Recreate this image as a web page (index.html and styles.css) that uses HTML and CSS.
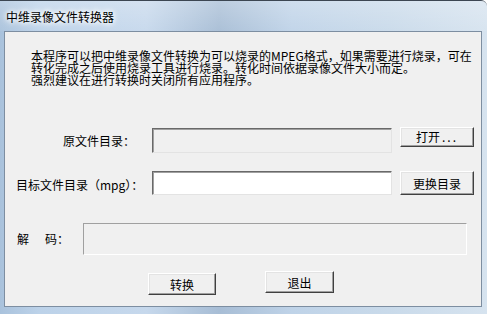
FILE: index.html
```html
<!DOCTYPE html>
<html lang="zh-CN">
<head>
    <meta charset="UTF-8">
    <title>中维录像文件转换器</title>
    <link rel="stylesheet" href="styles.css">
</head>
<body>
    <div class="window">
        <div class="titlebar">
            <span class="title">中维录像文件转换器</span>
        </div>
        <div class="client">
            <p class="intro">本程序可以把中维录像文件转换为可以烧录的MPEG格式，如果需要进行烧录，可在<br>转化完成之后使用烧录工具进行烧录。转化时间依据录像文件大小而定。<br>强烈建议在进行转换时关闭所有应用程序。</p>

            <div class="row row-src">
                <label class="label label-src">原文件目录：</label>
                <div class="field field-disabled"></div>
                <button class="btn btn-open">打开<span class="dots">...</span></button>
            </div>

            <div class="row row-dst">
                <label class="label label-dst">目标文件目录（mpg）：</label>
                <div class="field field-white"></div>
                <button class="btn btn-change">更换目录</button>
            </div>

            <div class="row row-decode">
                <label class="label label-decode">解<span class="gap"></span>码：</label>
                <div class="decode-box"></div>
            </div>

            <div class="actions">
                <button class="btn btn-convert">转换</button>
                <button class="btn btn-exit">退出</button>
            </div>
        </div>
    </div>
</body>
</html>
```

FILE: styles.css
```css
html, body {
    margin: 0;
    padding: 0;
}
body {
    width: 487px;
    height: 314px;
    overflow: hidden;
    font-family: "Noto Sans CJK SC", "Liberation Sans", sans-serif;
    font-size: 12px;
    color: #000;
}
.window {
    width: 487px;
    height: 314px;
    box-sizing: border-box;
    border-top: 1px solid #3c4652;
    border-top-right-radius: 6px;
    background: linear-gradient(to right, #a9c2dc 0%, #bcd2e9 8%, #c6d8ec 30%, #a7bdd5 45%, #bfd3e8 60%, #c9daea 80%, #d6e3ef 100%);
}
.titlebar {
    height: 30px;
    padding-left: 6px;
    display: flex;
    align-items: center;
    background: linear-gradient(to bottom, rgba(255,255,255,0.25), rgba(255,255,255,0.05));
}
.title {
    font-size: 12px;
    line-height: 12px;
    margin-top: 1px;
    text-shadow: 0 0 4px #fff, 0 0 6px #fff, 0 0 8px #fff;
}
.client {
    margin: 0 5px 0 4px;
    height: 276px;
    box-sizing: border-box;
    border: 1px solid #7d8ea1;
    background-color: #f0f0f0;
    overflow: hidden;
}
.intro {
    margin: 18px 0 0 26px;
    line-height: 12px;
    white-space: nowrap;
}
.row {
    display: flex;
    align-items: flex-start;
}
.label {
    box-sizing: border-box;
    white-space: nowrap;
}
.row-src {
    margin-top: 41px;
    height: 26px;
}
.row-dst {
    margin-top: 18px;
    height: 24px;
}
.row-decode {
    margin-top: 28px;
}
.label-src {
    width: 147px;
    padding-left: 58px;
    margin-top: 1px;
    line-height: 25px;
}
.label-dst {
    width: 147px;
    padding-left: 11px;
    line-height: 24px;
    padding-top: 2px;
}
.label-decode {
    width: 78px;
    padding-left: 12px;
    line-height: 32px;
}
.gap {
    display: inline-block;
    width: 16px;
}
.field {
    width: 240px;
    box-sizing: border-box;
    border-style: solid;
    border-width: 1px;
    border-color: #696969 #e3e3e3 #e3e3e3 #696969;
    box-shadow: inset 1px 1px 0 #a0a0a0;
}
.field-disabled {
    height: 25px;
    margin-top: 1px;
    background-color: #f0f0f0;
}
.field-white {
    height: 24px;
    background-color: #fff;
}
.decode-box {
    width: 384px;
    height: 32px;
    box-sizing: border-box;
    border-style: solid;
    border-width: 1px;
    border-color: #a0a0a0 #fff #fff #a0a0a0;
    background-color: #f0f0f0;
}
.btn {
    box-sizing: border-box;
    margin: 0;
    padding: 0;
    font-family: "Noto Sans CJK SC", "Liberation Sans", sans-serif;
    font-size: 12px;
    color: #000;
    background-color: #f0f0f0;
    border-style: solid;
    border-width: 1px;
    border-color: #fff #404040 #404040 #fff;
    box-shadow: inset -1px -1px 0 #a0a0a0, inset 1px 1px 0 #e3e3e3;
    border-radius: 0;
    cursor: pointer;
}
.btn-open {
    width: 74px;
    height: 20px;
    margin-left: 8px;
    line-height: 16px;
}
.dots {
    letter-spacing: 2px;
    margin-left: 2px;
}
.btn-change {
    width: 74px;
    height: 24px;
    margin-left: 8px;
}
.actions {
    display: flex;
    align-items: flex-start;
    margin-top: 16px;
    padding-left: 143px;
}
.btn-convert {
    width: 68px;
    height: 22px;
    margin-top: 2px;
}
.btn-exit {
    width: 69px;
    height: 22px;
    margin-left: 49px;
}
```
